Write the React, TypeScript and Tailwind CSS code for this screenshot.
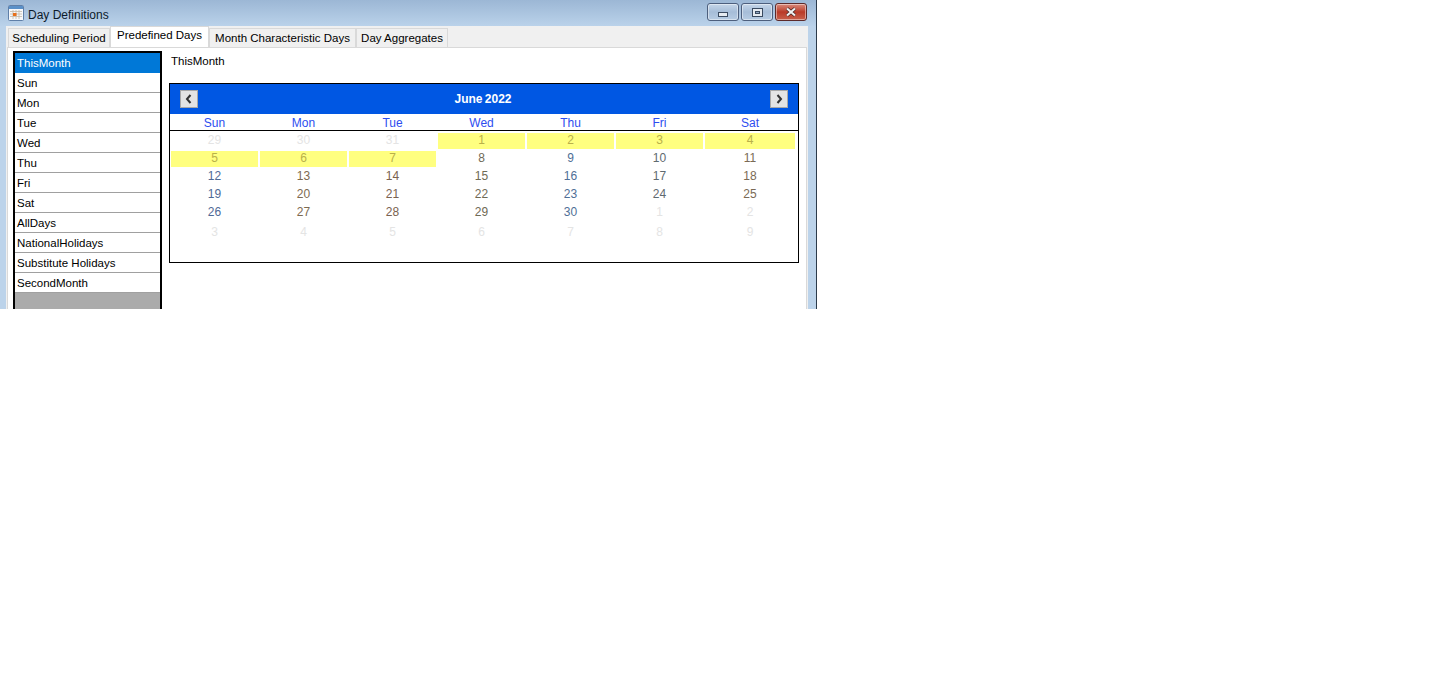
const items = ["ThisMonth","Sun","Mon","Tue","Wed","Thu","Fri","Sat","AllDays","NationalHolidays","Substitute Holidays","SecondMonth"];
const heads = ["Sun","Mon","Tue","Wed","Thu","Fri","Sat"];
type C = { d: number; m?: boolean; y?: boolean };
const rows: C[][] = [
  [{d:29,m:true},{d:30,m:true},{d:31,m:true},{d:1,y:true},{d:2,y:true},{d:3,y:true},{d:4,y:true}],
  [{d:5,y:true},{d:6,y:true},{d:7,y:true},{d:8},{d:9},{d:10},{d:11}],
  [{d:12},{d:13},{d:14},{d:15},{d:16},{d:17},{d:18}],
  [{d:19},{d:20},{d:21},{d:22},{d:23},{d:24},{d:25}],
  [{d:26},{d:27},{d:28},{d:29},{d:30},{d:1,m:true},{d:2,m:true}],
  [{d:3,m:true},{d:4,m:true},{d:5,m:true},{d:6,m:true},{d:7,m:true},{d:8,m:true},{d:9,m:true}],
];
const dayColors = ["text-[#4f6a96]","text-[#7d6a50]","text-[#7a6250]","text-[#6f6a55]","text-[#4f6f96]","text-[#5f6a70]","text-[#7a6a55]"];

function Chevron({ right }: { right?: boolean }) {
  return (
    <svg width="8" height="10" viewBox="0 0 8 10" className={right ? "rotate-180" : ""}>
      <path d="M5.5 1 L2 5 L5.5 9" fill="none" stroke="#333" strokeWidth="2" />
    </svg>
  );
}

function NavBtn({ right }: { right?: boolean }) {
  return (
    <div className="w-[18px] h-[18px] bg-[#e4e4e4] border border-[#a8a8a8] flex items-center justify-center">
      <Chevron right={right} />
    </div>
  );
}

function Tab({ label, active, w }: { label: string; active?: boolean; w: string }) {
  return (
    <div className={`${w} flex items-center justify-center whitespace-nowrap border border-b-0 border-[#d9d9d9] ${active ? "h-[21px] bg-white pb-[3px]" : "h-[19px] bg-[#f0f0f0] pt-[1px]"}`}>
      {label}
    </div>
  );
}

function WinBtn({ children, w, cls }: { children: React.ReactNode; w: string; cls: string }) {
  return (
    <div className={`${w} h-[18px] rounded-[3px] border border-[#4d5f7d] flex items-center justify-center shadow-[inset_0_0_0_1px_rgba(255,255,255,0.45)] ${cls}`}>
      {children}
    </div>
  );
}

export default function App() {
  return (
    <div className="w-[1434px] h-[692px] bg-white overflow-hidden" style={{ fontFamily: '"Liberation Sans", sans-serif' }}>
      <div className="w-[817px] h-[309px] flex flex-col bg-[#bcd3ea] border-r border-[#2b3a4a] overflow-hidden text-[11.5px] text-black">
        <div className="h-[26px] shrink-0 flex items-center bg-gradient-to-b from-[#9cb7d5] to-[#bad2ea] pl-[8px] pr-[9px]">
          <svg width="16" height="16" viewBox="0 0 16 16" className="shrink-0">
            <rect x="0.5" y="0.5" width="15" height="15" rx="1" fill="#f6f8fb" stroke="#5f7fa8" />
            <rect x="1" y="1" width="14" height="3" fill="#5a90c8" />
            <path d="M2 6.5H14M2 9H14M2 11.5H14M5 5V14M8 5V14M11 5V14" stroke="#c3b8a8" strokeWidth="0.8" />
            <rect x="5" y="8" width="3.5" height="3" fill="#e8701a" />
          </svg>
          <span className="ml-[4px] mt-[3px] text-[#0c1a2b] text-[12px]">Day Definitions</span>
          <div className="ml-auto flex gap-[2px] mt-[-2px]">
            <WinBtn w="w-[32px]" cls="bg-gradient-to-b from-[#c5d6e9] via-[#a6bdd8] to-[#b7cce3]">
              <div className="w-[10px] h-[5px] mt-[5px] bg-[#e6ebf1] border border-[#3a4a60]" />
            </WinBtn>
            <WinBtn w="w-[32px]" cls="bg-gradient-to-b from-[#c5d6e9] via-[#a6bdd8] to-[#b7cce3]">
              <div className="w-[11px] h-[9px] bg-[#e6ebf1] border border-[#3a4a60] flex items-center justify-center">
                <div className="w-[5px] h-[3px] bg-[#8fa6c2] border border-[#3a4a60]" />
              </div>
            </WinBtn>
            <WinBtn w="w-[32px]" cls="bg-gradient-to-b from-[#d98a7c] via-[#b93a28] to-[#c8604c] border-[#5c2a2a]">
              <svg width="12" height="10" viewBox="0 0 12 10">
                <path d="M2 1.5 L10 8.5 M10 1.5 L2 8.5" stroke="#3c2020" strokeWidth="3.4" />
                <path d="M2 1.5 L10 8.5 M10 1.5 L2 8.5" stroke="#f2f2f2" strokeWidth="2.2" />
              </svg>
            </WinBtn>
          </div>
        </div>
        <div className="flex-1 flex min-h-0 pl-[6px] pr-[8px]">
          <div className="flex-1 min-w-0 flex flex-col bg-[#f0f0f0] pl-[1px] pr-[1px]">
            <div className="h-[21px] shrink-0 flex items-end pl-[1px]">
              <Tab label="Scheduling Period" w="w-[102px]" />
              <Tab label="Predefined Days" active w="w-[99px]" />
              <Tab label="Month Characteristic Days" w="w-[147px]" />
              <Tab label="Day Aggregates" w="w-[92px]" />
            </div>
            <div className="flex-1 min-h-0 bg-white border border-b-0 border-[#d9d9d9] flex pt-[3px] pl-[5px] pr-[7px] gap-[7px]">
              <div className="w-[149px] shrink-0 border-2 border-b-0 border-black bg-[#ababab]">
                {items.map((t, i) => (
                  <div key={t} className={`h-[20px] pl-[2px] leading-[20px] border-b ${i === 0 ? "bg-[#0078d7] text-white border-[#0078d7]" : "bg-white border-[#a0a0a0]"}`}>{t}</div>
                ))}
              </div>
              <div className="flex-1 min-w-0">
                <div className="h-[32px] pl-[2px] pt-[2px] leading-[16px]">ThisMonth</div>
                <div className="h-[180px] border border-black">
                  <div className="h-[30px] bg-[#0057e3] flex items-center justify-between pl-[10px] pr-[10px]">
                    <NavBtn />
                    <span className="text-white font-bold text-[12px] mr-[2px] [word-spacing:-1px]">June 2022</span>
                    <NavBtn right />
                  </div>
                  <div className="grid grid-cols-[repeat(6,89px)_1fr] h-[17px] border-b border-black pr-[2px] text-center text-[12px] leading-[18px] text-[#2d4df0]">
                    {heads.map((h) => <div key={h}>{h}</div>)}
                  </div>
                  <div className="pr-[2px] pt-[2px] text-center text-[12px]">
                    {rows.map((r, i) => (
                      <div key={i} className={`grid grid-cols-[repeat(6,89px)_1fr] ${i === 5 ? "h-[22px] pt-[2px]" : "h-[18px]"}`}>
                        {r.map((c, j) => (
                          <div key={j} className={`${c.y ? "bg-[#ffff80] text-[#b9b04a] mx-[1px] h-[16px]" : c.m ? "text-[#e4e4e4]" : dayColors[j]} leading-[14px]`}>{c.d}</div>
                        ))}
                      </div>
                    ))}
                  </div>
                </div>
              </div>
            </div>
          </div>
        </div>
      </div>
    </div>
  );
}
